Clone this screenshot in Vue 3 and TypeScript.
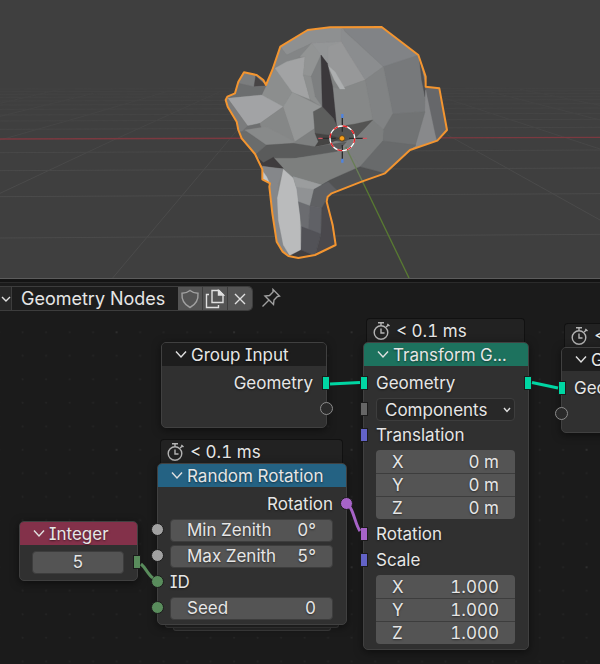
<script setup lang="ts">
import { ref } from 'vue'

type Shape = 'square' | 'circle' | 'open'
interface Socket { side: 'left' | 'right'; shape: Shape; color: string }
interface Row {
  kind: 'text' | 'value' | 'select' | 'vector' | 'empty'
  label?: string
  value?: string
  align?: 'right'
  values?: { axis: string; value: string }[]
  sockets?: Socket[]
}
interface GraphNode {
  id: string
  title: string
  x: number
  y: number
  width: number
  header: string
  time?: string
  stacked?: boolean
  roomy?: boolean
  rows: Row[]
}

const teal = '#00d6a3'
const green = '#598c5c'
const gray = '#a1a1a1'
const violet = '#6363c7'
const purple = '#a663c7'

const left = (shape: Shape, color = 'transparent'): Socket => ({ side: 'left', shape, color })
const right = (shape: Shape, color = 'transparent'): Socket => ({ side: 'right', shape, color })

const nodes = ref<GraphNode[]>([
  {
    id: 'group-input', title: 'Group Input', x: 161, y: 28, width: 166, header: '#1d1d1d', roomy: true,
    rows: [
      { kind: 'text', label: 'Geometry', align: 'right', sockets: [right('square', teal)] },
      { kind: 'empty', sockets: [right('open')] },
    ],
  },
  {
    id: 'integer', title: 'Integer', x: 19, y: 207, width: 119, header: '#83314a', roomy: true,
    rows: [{ kind: 'value', value: '5', sockets: [right('square', green)] }],
  },
  {
    id: 'random-rotation', title: 'Random Rotation', x: 157, y: 125, width: 190, header: '#246283',
    time: '< 0.1 ms', stacked: true,
    rows: [
      { kind: 'text', label: 'Rotation', align: 'right', sockets: [right('circle', purple)] },
      { kind: 'value', label: 'Min Zenith', value: '0°', sockets: [left('circle', gray)] },
      { kind: 'value', label: 'Max Zenith', value: '5°', sockets: [left('circle', gray)] },
      { kind: 'text', label: 'ID', sockets: [left('circle', green)] },
      { kind: 'value', label: 'Seed', value: '0', sockets: [left('circle', green)] },
    ],
  },
  {
    id: 'transform', title: 'Transform G...', x: 363, y: 4, width: 166, header: '#1d725e',
    time: '< 0.1 ms',
    rows: [
      { kind: 'text', label: 'Geometry', sockets: [left('square', teal), right('square', teal)] },
      { kind: 'select', label: 'Mode', value: 'Components', sockets: [left('square', '#666666')] },
      { kind: 'text', label: 'Translation', sockets: [left('square', violet)] },
      { kind: 'vector', label: 'Translation', values: [{ axis: 'X', value: '0 m' }, { axis: 'Y', value: '0 m' }, { axis: 'Z', value: '0 m' }] },
      { kind: 'text', label: 'Rotation', sockets: [left('square', purple)] },
      { kind: 'text', label: 'Scale', sockets: [left('square', violet)] },
      { kind: 'vector', label: 'Scale', values: [{ axis: 'X', value: '1.000' }, { axis: 'Y', value: '1.000' }, { axis: 'Z', value: '1.000' }] },
    ],
  },
  {
    id: 'group-output', title: 'Group Output', x: 561, y: 9, width: 166, header: '#1d1d1d', roomy: true,
    time: '< 0.1 ms',
    rows: [
      { kind: 'text', label: 'Geometry', sockets: [left('square', teal)] },
      { kind: 'empty', sockets: [left('open')] },
    ],
  },
])

const treeName = ref('Geometry Nodes')

const dots = [0, 1, 2, 3, 4].flatMap((r) => [0, 1, 2, 3, 4].map((c) => ({ x: 2 + c * 23.5, y: 2 + r * 23.5, major: r === 0 && c === 0 })))

const outline =
  '841,140 923,90 990,82 1145,81 1255,165 1277,230 1277,260 1318,265 1341,390 1312,422 1230,450 1155,520 1085,545 995,580 983,590 980,605 998,675 1007,735 945,765 895,774 865,768 848,755 830,725 817,640 808,560 810,550 787,538 787,508 765,462 725,415 715,390 710,365 683,320 677,300 682,290 705,280 715,245 732,217 770,225 790,240 798,255 817,210'

interface Facet { fill: string; points: string }
const facets: Facet[] = [
  { fill: '#8e9091', points: '841,140 925,90 1035,81 1023,125 935,130 860,165' },
  { fill: '#838586', points: '841,140 860,165 935,130 900,170 825,205 798,257' },
  { fill: '#8c8e8e', points: '798,257 825,205 877,277 850,320 785,285' },
  { fill: '#a2a3a4', points: '825,205 860,185 915,170 910,225 930,298 877,277' },
  { fill: '#929494', points: '915,170 900,170 935,130 965,165 933,230 910,225' },
  { fill: '#949697', points: '935,130 1023,125 1035,145 1030,225 985,200 963,165' },
  { fill: '#7d7f80', points: '963,165 933,230 945,290 967,325' },
  { fill: '#8d8f8f', points: '910,225 933,230 945,290 967,322 930,298' },
  { fill: '#7b7d7e', points: '732,217 770,227 762,260 716,250' },
  { fill: '#474445', points: '767,228 800,257 762,260' },
  { fill: '#6c6e6f', points: '716,250 762,260 798,257 785,285 683,295 705,278' },
  { fill: '#a2a3a5', points: '683,295 785,285 850,320 780,370 743,378' },
  { fill: '#7b7c7d', points: '677,295 683,295 743,378 725,420 705,360' },
  { fill: '#6e6f70', points: '743,378 780,370 800,435 735,440 715,405' },
  { fill: '#858787', points: '780,370 850,320 885,425 800,435' },
  { fill: '#959797', points: '850,320 877,277 967,322 940,335 945,385 885,425' },
  { fill: '#7e8080', points: '885,425 945,385 975,425 945,440 870,435' },
  { fill: '#8b8d8f', points: '1023,85 1150,200 1095,240 1023,125' },
  { fill: '#818386', points: '1023,81 1145,81 1257,165 1150,200' },
  { fill: '#979899', points: '985,140 1023,125 1095,240 1020,267 985,200' },
  { fill: '#77797b', points: '1150,200 1257,165 1277,260 1275,335 1178,342' },
  { fill: '#818384', points: '1095,240 1150,200 1178,342 1150,390 1118,360' },
  { fill: '#868888', points: '1020,267 1095,240 1118,360 1050,385 1010,395 990,260' },
  { fill: '#adafb0', points: '985,198 1005,215 1035,267 1020,267 1003,240' },
  { fill: '#3b383b', points: '963,165 982,190 998,260 1010,380 1000,385 967,322' },
  { fill: '#4e4f52', points: '1257,168 1277,260 1275,290 1265,240' },
  { fill: '#66676a', points: '1277,260 1318,265 1341,390 1312,422 1290,370' },
  { fill: '#88898b', points: '1277,270 1310,425 1235,450 1250,420 1275,335' },
  { fill: '#717374', points: '1178,342 1275,335 1245,440 1148,423 1150,390' },
  { fill: '#7c7e7e', points: '1118,360 1150,390 1148,423 1080,500 1040,440 1050,400' },
  { fill: '#686a6b', points: '1148,423 1248,435 1230,450 1155,520 1080,500' },
  { fill: '#5d5e5d', points: '940,335 967,320 1000,355 1012,380 985,405 945,400' },
  { fill: '#545453', points: '985,405 1012,380 1065,372 1118,360 1070,410 1030,425 985,420' },
  { fill: '#454443', points: '945,400 985,405 1020,415 985,432 945,440 955,425' },
  { fill: '#6a6c6c', points: '715,395 740,395 800,435 765,465' },
  { fill: '#888a8a', points: '735,390 800,380 885,425 880,430 800,435' },
  { fill: '#5a5b5b', points: '765,465 800,435 880,430 945,440 1040,425 1010,460 885,475 820,485 790,500' },
  { fill: '#7d7f7e', points: '820,475 885,475 1010,455 1040,440 1080,500 990,540 965,555 880,530 850,505' },
  { fill: '#3f3c3e', points: '775,475 790,488 820,472 850,505 787,500' },
  { fill: '#515253', points: '1080,500 1155,520 1085,545 995,580 965,555 990,540' },
  { fill: '#85878a', points: '787,498 850,508 835,550 832,595 840,690 865,768 830,740 808,560 787,538' },
  { fill: '#c2c7cb', points: '787,512 800,530 808,548 787,538' },
  { fill: '#babbbc', points: '850,508 880,535 892,570 900,640 903,750 870,768 850,735 835,660 832,595' },
  { fill: '#909294', points: '880,530 965,555 942,568 930,618 895,605 890,565' },
  { fill: '#9b9d9e', points: '880,530 965,555 942,568 888,560' },
  { fill: '#5f6063', points: '965,555 985,545 1010,570 980,600 965,625 930,618 942,568' },
  { fill: '#6b6c70', points: '895,605 930,618 925,695 905,680' },
  { fill: '#606166', points: '930,618 965,625 963,702 925,692' },
  { fill: '#525257', points: '905,680 963,702 945,768 903,750' },
  { fill: '#4a484c', points: '965,625 980,598 1007,735 945,768 963,702' },
  { fill: '#403e40', points: '903,750 945,768 895,776 868,768' },
]
</script>

<template>
  <main class="workspace">
    <svg class="viewport" viewBox="0 0 1800 834" role="img" aria-label="3D viewport">
      <defs>
        <linearGradient id="fade" x1="0" y1="0" x2="0" y2="1">
          <stop offset="0.2" stop-color="#000" />
          <stop offset="0.5" stop-color="#aaa" />
          <stop offset="0.65" stop-color="#fff" />
        </linearGradient>
        <mask id="horizon" maskUnits="userSpaceOnUse" x="0" y="0" width="1800" height="834">
          <rect width="1800" height="834" fill="url(#fade)" />
        </mask>
        <clipPath id="head"><polygon :points="outline" /></clipPath>
      </defs>
      <rect width="1800" height="834" fill="#3f3f3f" />
      <g mask="url(#horizon)" fill="none" stroke="#4b4b4b" stroke-width="3">
        <path d="M0 714L1800 703M0 590L1800 581M0 512L1800 504M0 458L1800 450M0 388L1800 382M0 363L1800 358M0 345L1800 340M0 328L1800 324M0 315L1800 311M0 303L1800 299M0 292L1800 289M0 283L1800 280M0 275L1800 272M0 267L1800 265" />
        <path d="M338 834L690 416L800 290M0 580L345 418L660 275M0 420L270 343L500 275M0 349L280 280M0 310L180 268M1341 404L1800 660M1330 293L1800 447M1450 270L1800 360M1560 268L1800 316" />
      </g>
      <path d="M0 417L1800 412" stroke="#7c3940" stroke-width="4" />

      <g clip-path="url(#head)">
        <polygon :points="outline" fill="#808282" />
        <polygon v-for="(f, i) in facets" :key="i" :points="f.points" :fill="f.fill" :stroke="f.fill" stroke-width="1" />
      </g>
      <path d="M1090 550L1227 834" stroke="#587a32" stroke-width="4" />
      <path d="M1037 440L1090 550" stroke="#687e55" stroke-width="4" />
      <polygon :points="outline" fill="none" stroke="#f39530" stroke-width="6" stroke-linejoin="round" />

      <g fill="none" stroke-width="4">
        <path d="M1027 350V395M1027 435V480M963 415H1007M1047 415H1090" stroke="#2c2c2c" />
        <path d="M1027 342V354M1027 476V488" stroke="#5084df" stroke-width="7" />
        <path d="M955 415H968M1088 415H1101" stroke="#cf5661" />
        <circle cx="1027" cy="415" r="37" stroke="#fff" />
        <circle cx="1027" cy="415" r="37" stroke="#ed2024" stroke-dasharray="14.53 14.53" />
      </g>
      <circle cx="1026" cy="415" r="8" fill="#f7a01d" stroke="#5c3a08" stroke-width="2" />
    </svg>

    <section class="editor">
      <header class="toolbar">
        <div class="datablock">
          <button class="browse" aria-label="Browse node trees">
            <svg width="10" height="8" viewBox="0 0 10 8"><path d="M1 2L5 6L9 2" /></svg>
          </button>
          <input v-model="treeName" class="tree-name" aria-label="Node tree name" />
          <button class="tool" aria-label="Fake user">
            <svg width="20" height="20" viewBox="0 0 20 20" class="dim"><path d="M10 1.5C7.5 3.5 4.800 4.300 2 4.300C1.500 10.500 4 15.500 10 18.500C16 15.500 18.500 10.500 18 4.300C15.200 4.300 12.500 3.500 10 1.500Z" /></svg>
          </button>
          <button class="tool" aria-label="New node tree">
            <svg width="20" height="20" viewBox="0 0 20 20"><path d="M7 1.500H14L18 5.500V13.500H7ZM4 5.500H1.500V18.500H13.500V16" /><path d="M13.500 1.500V6H18.500Z" class="solid" /></svg>
          </button>
          <button class="tool" aria-label="Unlink">
            <svg width="20" height="20" viewBox="0 0 20 20"><path d="M5 5L15 15M15 5L5 15" /></svg>
          </button>
        </div>
        <button class="pin" aria-label="Pin">
          <svg width="20" height="20" viewBox="0 0 20 20" class="dim"><path d="M12 1.500L18.500 8L16.500 8.500L13 12L12.500 16.500L4 8L8.500 7.500L12 4ZM7.500 12.500L1.500 18.500" /></svg>
        </button>
      </header>

      <div class="canvas">
        <svg class="backdrop" aria-hidden="true">
          <defs>
            <pattern id="dots" x="114.600" y="16.300" width="117.500" height="117.500" patternUnits="userSpaceOnUse">
              <circle v-for="(d, i) in dots" :key="i" :cx="d.x" :cy="d.y" r="1" :fill="d.major ? '#333333' : '#242424'" />
            </pattern>
          </defs>
          <rect width="100%" height="100%" fill="url(#dots)" />
        </svg>

        <article v-for="node in nodes" :key="node.id" class="placed" :style="{ left: node.x + 'px', top: node.y + 'px', width: node.width + 'px' }">
          <div v-if="node.time" class="timing">
            <svg width="18" height="20" viewBox="0 0 18 20">
              <circle cx="8" cy="11.500" r="6.800" />
              <path d="M8 4.500V2M5 1.800H11M13.200 6L15.500 3.700M14.300 3L16.500 5M8 7.500V12H11.500" />
            </svg>
            <span>{{ node.time }}</span>
          </div>
          <div class="node" :class="{ roomy: node.roomy }">
            <h2 class="title" :style="{ background: node.header }">
              <button class="collapse" :aria-label="'Collapse ' + node.title">
                <svg width="12" height="10" viewBox="0 0 12 10"><path d="M1 1.500L6 7L11 1.500" /></svg>
              </button>
              <span>{{ node.title }}</span>
            </h2>
            <div class="rows">
              <div v-for="(row, i) in node.rows" :key="i" class="row" :class="[row.kind, row.align]">
                <span v-if="row.kind === 'text'">{{ row.label }}</span>
                <label v-else-if="row.kind === 'value'" class="field" :class="{ centered: !row.label }">
                  <span v-if="row.label">{{ row.label }}</span>
                  <input v-model="row.value" :aria-label="row.label || node.title" />
                </label>
                <div v-else-if="row.kind === 'select'" class="picker">
                  <select v-model="row.value" :aria-label="row.label">
                    <option>Components</option>
                  </select>
                  <svg width="8" height="6" viewBox="0 0 8 6"><path d="M1 1L4 4.500L7 1" /></svg>
                </div>
                <div v-else-if="row.kind === 'vector'" class="axes">
                  <label v-for="v in row.values" :key="v.axis" class="axis">
                    <span>{{ v.axis }}</span>
                    <input v-model="v.value" :aria-label="row.label + ' ' + v.axis" />
                  </label>
                </div>
                <i v-for="s in row.sockets" :key="s.side" class="socket" :class="[s.side, s.shape]" :style="{ backgroundColor: s.shape === 'open' ? undefined : s.color }"></i>
              </div>
            </div>
          </div>
          <template v-if="node.stacked">
            <div class="sheet near"></div>
            <div class="sheet far"></div>
          </template>
        </article>

        <svg class="links" aria-hidden="true">
          <path d="M330 70L360 68.500" :stroke="teal" />
          <path d="M532 68.500L558 74" :stroke="teal" />
          <path d="M350 193C354 199 356 212 360 217" :stroke="purple" />
          <path d="M141 250C146 254 148 261 153 264" :stroke="green" />
        </svg>
      </div>
    </section>
  </main>
</template>

<style>
body {
  margin: 0;
  background: #1b1b1b;
}
</style>

<style scoped>
.workspace {
  display: flex;
  flex-direction: column;
  min-height: 100vh;
  overflow: hidden;
  background: #1b1b1b;
  color: #e6e6e6;
  font-family: Inter, "Noto Sans", sans-serif;
  font-size: 17px;
  line-height: 22px;
  font-feature-settings: "cv08", "tnum";
}
.workspace * {
  box-sizing: border-box;
}
.viewport {
  display: block;
  width: 100%;
  height: auto;
}
button,
input,
select {
  margin: 0;
  padding: 0;
  border: 0;
  background: none;
  color: inherit;
  font: inherit;
  font-feature-settings: inherit;
  text-shadow: inherit;
}
button svg,
.timing svg,
.picker svg {
  display: block;
  fill: none;
  stroke: #e0e0e0;
  stroke-width: 1.4;
}
.solid {
  fill: #e0e0e0;
}
button svg.dim {
  stroke: #a0a0a0;
}
.editor {
  display: flex;
  flex: 1;
  flex-direction: column;
  border-top: 1px solid #5c5c5c;
}
.toolbar {
  display: flex;
  align-items: center;
  gap: 8px;
  padding: 3px 0;
  border-top: 3px solid #141414;
  box-shadow: inset 0 1px #2b2b2b;
}
.datablock {
  display: flex;
  height: 25px;
  margin-top: 1px;
  overflow: hidden;
  border: 1px solid #3d3d3d;
  border-left: 0;
  border-radius: 0 5px 5px 0;
}
.browse {
  display: grid;
  place-items: center;
  width: 11px;
  background: #282828;
  justify-content: end;
}
.tree-name {
  width: 167px;
  padding: 0 9px;
  border-left: 1px solid #3d3d3d;
  background: #1d1d1d;
  font-size: 18px;
}
.tool {
  display: grid;
  place-items: center;
  width: 25px;
  border-right: 1px solid #3d3d3d;
  background: #545454;
}
.tool:last-child {
  width: 24px;
  border-right: 0;
}
.pin {
  display: grid;
  place-items: center;
}
.canvas {
  position: relative;
  flex: 1;
  min-height: 348px;
  overflow: hidden;
}
.backdrop,
.links {
  position: absolute;
  inset: 0;
  width: 100%;
  height: 100%;
}
.links {
  fill: none;
  stroke-width: 3;
  pointer-events: none;
}
.placed {
  position: absolute;
  text-shadow: 0 1px 2px #00000080;
}
.timing {
  display: flex;
  align-items: center;
  gap: 5px;
  height: 24px;
  margin: 0 4px 0 3px;
  padding-left: 6px;
  border: 1px solid #111111;
  border-bottom: 0;
  border-radius: 4px 4px 0 0;
  background: #222222;
}
.timing svg {
  stroke: #b4b4b4;
}
.node {
  position: relative;
  padding-bottom: 3px;
  border: 1px solid #404040;
  border-radius: 5px;
  background: #303030;
  box-shadow: 0 2px 8px #00000080;
}
.node.roomy {
  padding-bottom: 5px;
}
.title {
  display: flex;
  align-items: center;
  gap: 4px;
  height: 23px;
  margin: 0;
  padding-left: 13px;
  border-radius: 4px 4px 0 0;
  font-size: 17px;
  font-weight: 400;
  white-space: nowrap;
}
.rows {
  padding-top: 4px;
}
.row {
  position: relative;
  display: flex;
  align-items: center;
  height: 26px;
  padding: 0 13px 0 12px;
}
.row.right {
  justify-content: flex-end;
}
.row.vector {
  height: auto;
  padding-top: 2px;
  padding-bottom: 2px;
}
.field,
.axis {
  display: flex;
  flex: 1;
  align-items: center;
  min-width: 0;
  height: 23px;
  padding: 0 16px;
  background: #545454;
}
.field {
  border: 1px solid #3d3d3d;
  border-radius: 4px;
}
.field span {
  white-space: nowrap;
}
.field input,
.axis input {
  flex: 1;
  width: 0;
  min-width: 0;
  text-align: right;
}
.field.centered input {
  text-align: center;
}
.axes {
  flex: 1;
  min-width: 0;
  overflow: hidden;
  border-radius: 4px;
}
.axis + .axis {
  border-top: 1px solid #3d3d3d;
}
.picker {
  position: relative;
  flex: 1;
}
.picker select {
  display: block;
  width: 100%;
  height: 23px;
  padding-left: 8px;
  border: 1px solid #3d3d3d;
  border-radius: 4px;
  background: #282828;
  appearance: none;
}
.picker svg {
  position: absolute;
  top: 9px;
  right: 4px;
  pointer-events: none;
}
.socket {
  position: absolute;
  top: 6px;
  width: 8px;
  height: 14px;
  border: 1px solid #1b1b1b;
}
.socket.left {
  left: -4px;
}
.socket.right {
  right: -4px;
}
.socket.circle,
.socket.open {
  top: 6px;
  width: 13px;
  height: 13px;
  border-radius: 50%;
}
.socket.circle.left,
.socket.open.left {
  left: -7px;
}
.socket.circle.right,
.socket.open.right {
  right: -7px;
}
.socket.open {
  border-color: #8c8c8c;
  background: #2a2a2a;
}
.sheet {
  height: 3px;
  border: 1px solid #3c3c3c;
  border-top: 0;
  border-radius: 0 0 5px 5px;
  background: #292929;
}
.near {
  margin: 0 8px;
}
.far {
  margin: 0 16px;
}
</style>
